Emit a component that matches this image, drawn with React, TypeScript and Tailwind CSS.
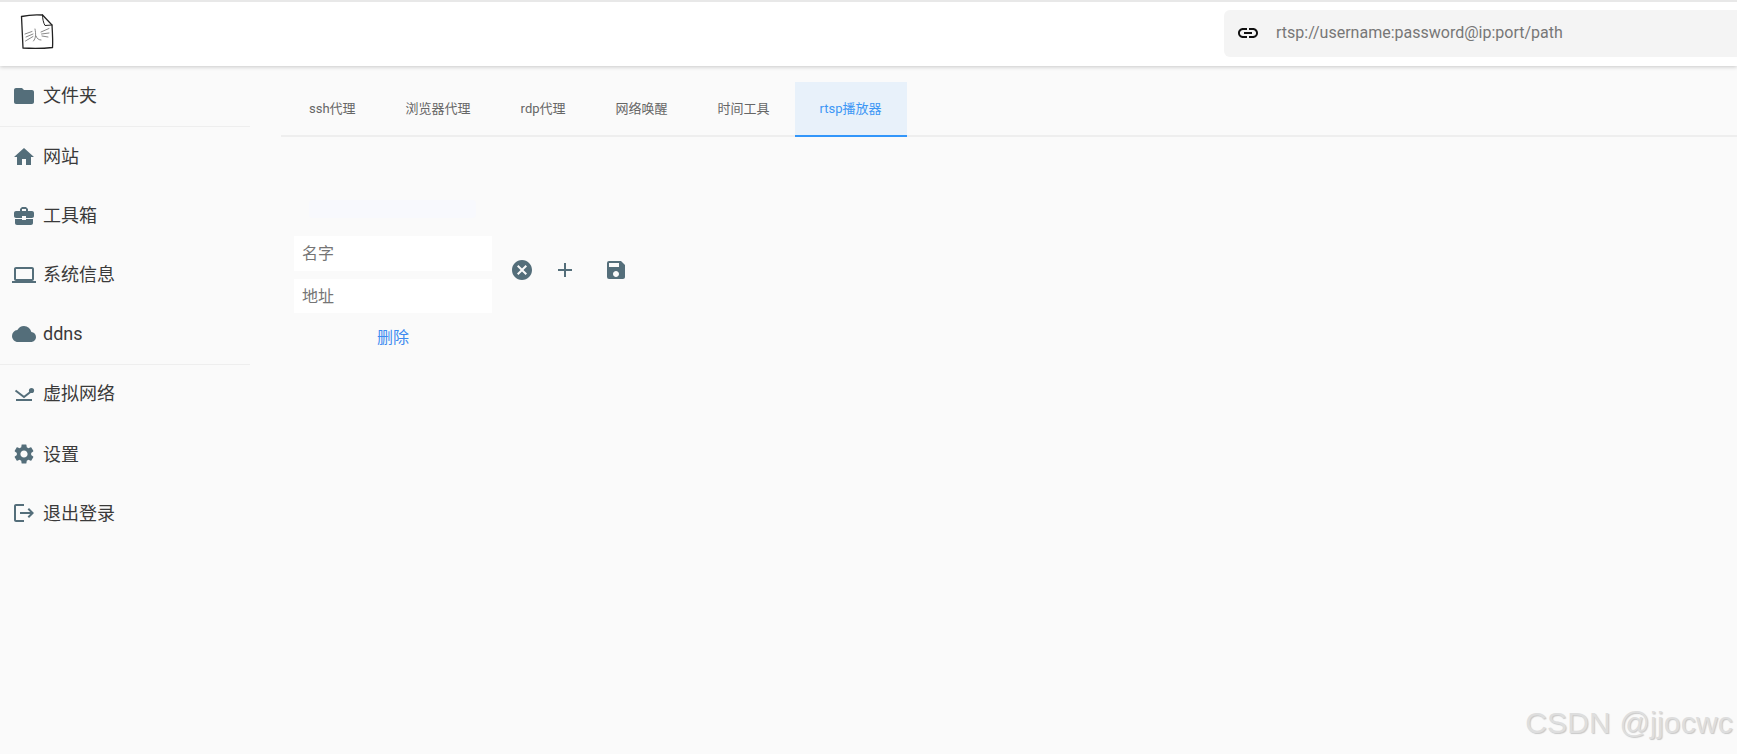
import { ReactNode } from 'react'
import { MdFolder, MdHome, MdBusinessCenter, MdLaptop, MdCloud, MdSettings, MdLogout, MdCancel, MdAdd, MdSave, MdLink } from 'react-icons/md'

function VpnIcon() {
  return (
    <svg viewBox="0 0 24 24" className="w-6 h-6" fill="none" stroke="currentColor">
      <path d="M3.5 8.5 L12 15 L19 9.5" strokeWidth="2" />
      <circle cx="19.5" cy="8.5" r="2.6" fill="currentColor" stroke="none" />
      <path d="M4 18 H20" strokeWidth="2" />
    </svg>
  )
}

function Logo() {
  return (
    <svg viewBox="0 0 36 38" className="w-9 h-[38px]" fill="none" stroke="#222" strokeLinecap="round">
      <path d="M3.5 4.5 C10 3 18 2.5 24.5 3 L34 13 C34.5 21 35 29 34.5 35.5 C25 36.5 14 36.5 5 36 C4.5 26 4 14 3.5 4.5 Z" strokeWidth="1.3" />
      <path d="M24.5 3 C24.5 7 25.5 11 27 13.5 L34 13" strokeWidth="1" />
      <g stroke="#555" strokeWidth="0.7">
        <path d="M7 22 L14 19.5 M8 25 L15 22 M7.5 29 L15 24.5" />
        <path d="M17 17 C18 22 18 26 15.5 29 M18 24 C19 27 21 28 23 28" />
        <path d="M23 20 L31 16.5 M23.5 22 L31 21 M24 24 L30 25" />
      </g>
    </svg>
  )
}

function NavItem({ icon, label, rowClass }: { icon: ReactNode; label: string; rowClass: string }) {
  return (
    <div className={'flex items-center gap-[7px] pl-3 ' + rowClass}>
      <span className="text-[#546e7a] shrink-0">{icon}</span>
      <span className="text-[18px] text-[#3a3a3a]">{label}</span>
    </div>
  )
}

const tabs = ['ssh代理', '浏览器代理', 'rdp代理', '网络唤醒', '时间工具', 'rtsp播放器']

export default function App() {
  return (
    <div className="h-screen overflow-hidden flex flex-col bg-[#fafafa] relative font-['Roboto','Noto_Sans_CJK_SC',sans-serif]">
      <header className="relative z-10 h-[66px] shrink-0 bg-white border-t-2 border-[#e8e8e8] shadow-[0_1px_4px_rgba(0,0,0,0.2)] flex items-center justify-between">
        <div className="pl-[18px] -mt-[7px]">
          <Logo />
        </div>
        <div className="w-[513px] h-[47px] -mt-[2px] bg-[#f4f4f4] rounded-l-md flex items-center pl-3 gap-[16px]">
          <MdLink className="w-6 h-6 text-[#111] shrink-0" />
          <input placeholder="rtsp://username:password@ip:port/path" className="flex-1 bg-transparent outline-none text-[16px] placeholder:text-[#777]" />
        </div>
      </header>

      <div className="flex flex-1">
        <aside className="w-[250px] shrink-0">
          <NavItem rowClass="h-[59px]" icon={<MdFolder size={24} />} label="文件夹" />
          <div className="h-px mt-px bg-[#eeeeee]" />
          <NavItem rowClass="h-[59px]" icon={<MdHome size={24} />} label="网站" />
          <NavItem rowClass="h-[59px]" icon={<MdBusinessCenter size={24} />} label="工具箱" />
          <NavItem rowClass="h-[59px]" icon={<MdLaptop size={24} />} label="系统信息" />
          <NavItem rowClass="h-[59px]" icon={<MdCloud size={24} />} label="ddns" />
          <div className="h-px mt-px bg-[#eeeeee]" />
          <NavItem rowClass="h-[57px]" icon={<VpnIcon />} label="虚拟网络" />
          <NavItem rowClass="h-[64px]" icon={<MdSettings size={24} />} label="设置" />
          <NavItem rowClass="h-[54px]" icon={<MdLogout size={24} />} label="退出登录" />
        </aside>

        <main className="flex-1 pl-[31px] pt-4">
          <div className="flex border-b-2 border-[#eeeeee] h-[55px] pl-[3px]">
            {tabs.map(t => (
              <div key={t}
                className={t === 'rtsp播放器'
                  ? 'h-[55px] px-[25px] flex items-center text-[13px] text-[#3d97f5] bg-[#e8f1fa] border-b-2 border-[#3296fa]'
                  : 'h-[53px] px-[25px] flex items-center text-[13px] text-[#666]'}>
                {t}
              </div>
            ))}
          </div>

          <div className="ml-[28px] mt-[63px] w-[167px] h-[18px] rounded bg-[#f8f9fd]" />

          <div className="flex items-center mt-[18px] ml-[13px]">
            <div className="w-[198px] flex flex-col">
              <input placeholder="名字" className="h-[35px] bg-white px-2 text-[16px] outline-none placeholder:text-[#757575]" />
              <input placeholder="地址" className="h-[34px] mt-2 bg-white px-2 text-[16px] outline-none placeholder:text-[#757575]" />
            </div>
            <div className="flex items-center text-[#546e7a] ml-[18px] mb-[10px]">
              <MdCancel size={24} />
              <MdAdd size={24} className="ml-[19px]" />
              <MdSave size={24} className="ml-[27px]" />
            </div>
          </div>
          <div className="ml-[13px] w-[198px] mt-[15px] text-center text-[16px] leading-5 text-[#3d8bf0]">删除</div>
        </main>
      </div>

      <div className="absolute right-[4px] bottom-[14px] font-['Liberation_Sans',sans-serif] text-[30px] tracking-[0.2px] leading-[34px] text-[#dedede] [text-shadow:1px_1px_1px_#c8c8c8]">
        CSDN @jjocwc
      </div>
    </div>
  )
}
